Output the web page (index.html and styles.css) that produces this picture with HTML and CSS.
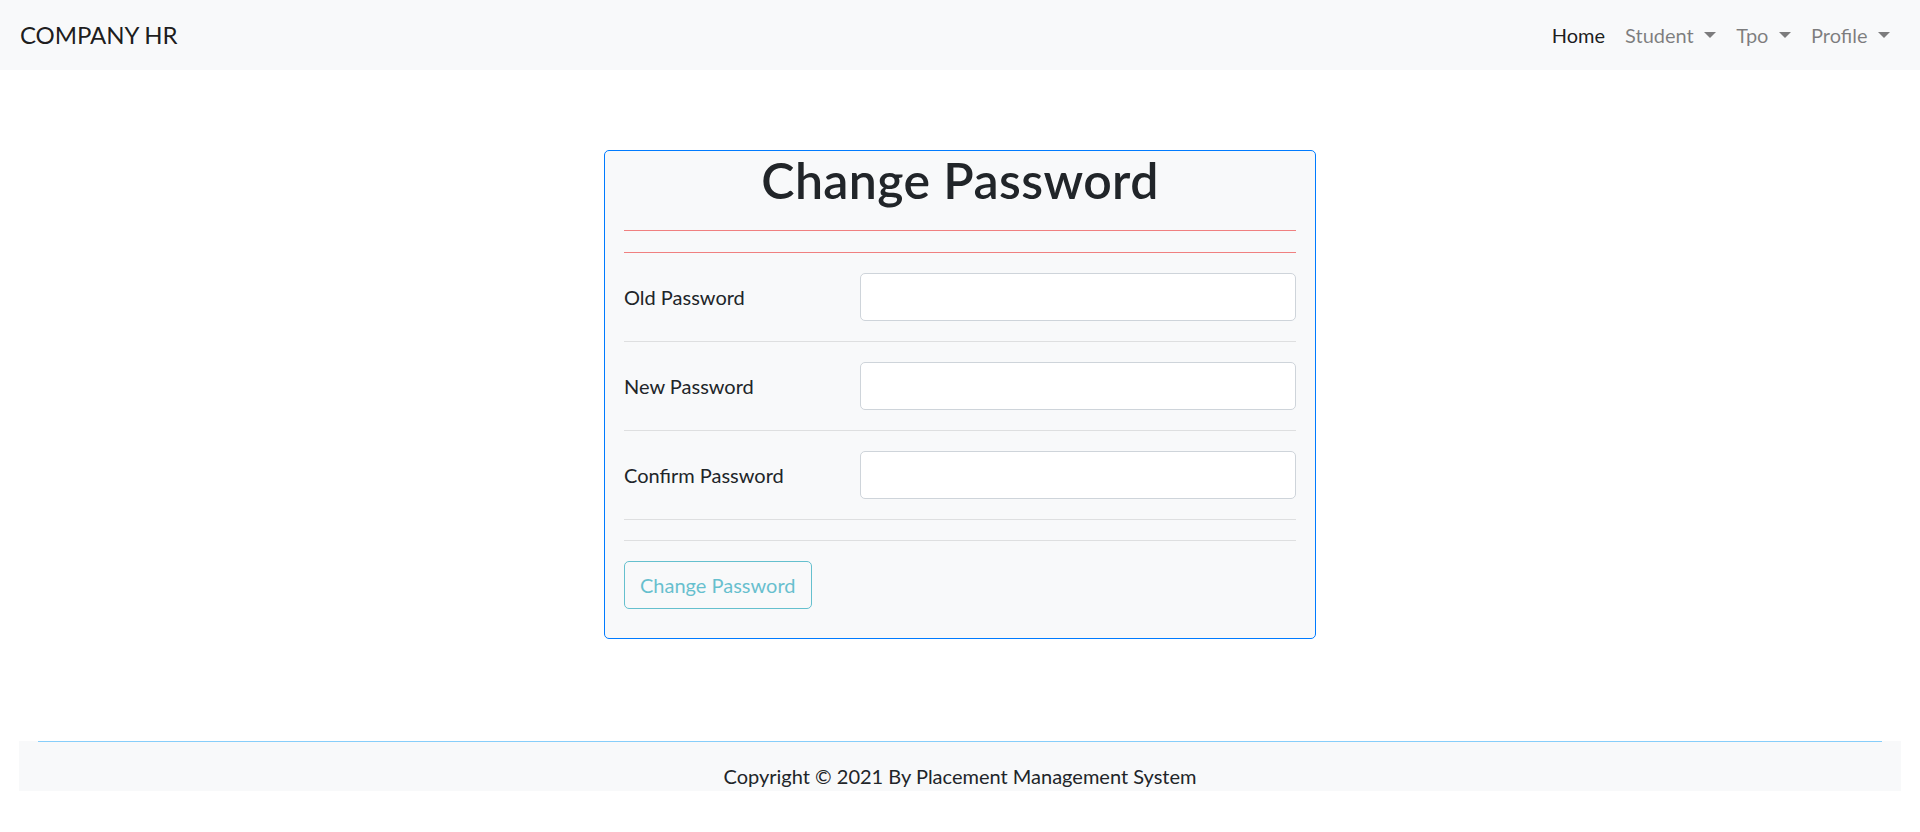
FILE: index.html
```html
<!DOCTYPE html>
<html lang="en">
<head>
<meta charset="utf-8">
<title>Change Password</title>
<link rel="stylesheet" href="styles.css">
</head>
<body>
<nav class="navbar">
  <a class="brand" href="#">COMPANY HR</a>
  <ul class="nav">
    <li><a class="nav-link active" href="#">Home</a></li>
    <li><a class="nav-link toggle" href="#">Student</a></li>
    <li><a class="nav-link toggle" href="#">Tpo</a></li>
    <li><a class="nav-link toggle" href="#">Profile</a></li>
  </ul>
</nav>

<main class="main">
  <form class="card">
    <h1 class="title">Change Password</h1>
    <div class="rule rule-red"></div>
    <div class="rule rule-red rule-second"></div>
    <div class="field">
      <label class="label" for="old">Old Password</label>
      <input class="input" id="old" type="password">
    </div>
    <div class="rule"></div>
    <div class="field">
      <label class="label" for="new">New Password</label>
      <input class="input" id="new" type="password">
    </div>
    <div class="rule"></div>
    <div class="field">
      <label class="label" for="confirm">Confirm Password</label>
      <input class="input" id="confirm" type="password">
    </div>
    <div class="rule"></div>
    <div class="rule"></div>
    <div class="actions">
      <button class="btn" type="submit" disabled>Change Password</button>
    </div>
  </form>
</main>

<footer class="footer">
  <div class="footer-line"></div>
  <p class="footer-text">Copyright © 2021 By Placement Management System</p>
</footer>
</body>
</html>
```

FILE: styles.css
```css
* {
  box-sizing: border-box;
}

html, body {
  margin: 0;
  padding: 0;
  background: #fff;
}

body {
  font-family: Lato, "Open Sans", "Liberation Sans", sans-serif;
  font-size: 20px;
  line-height: 30px;
  color: #212529;
}

a {
  text-decoration: none;
}

/* Navbar */
.navbar {
  height: 70px;
  padding: 10px 20px;
  background: #f8f9fa;
  display: flex;
  align-items: center;
  justify-content: space-between;
}

.brand {
  font-size: 24px;
  letter-spacing: -0.1px;
  line-height: 37.5px;
  padding: 6.25px 0;
  color: rgba(0, 0, 0, 0.9);
}

.nav {
  list-style: none;
  margin: 0;
  padding: 0;
  display: flex;
}

.nav-link {
  display: block;
  padding: 10px;
  color: rgba(0, 0, 0, 0.5);
}

.nav-link.active {
  color: rgba(0, 0, 0, 0.9);
}

.toggle::after {
  content: "";
  display: inline-block;
  margin-left: 10.5px;
  vertical-align: 0.255em;
  border-top: 0.3em solid;
  border-right: 0.3em solid transparent;
  border-left: 0.3em solid transparent;
  border-bottom: 0;
}

/* Card */
.main {
  padding-top: 80px;
}

.card {
  width: 712px;
  margin: 0 auto;
  background: #f8f9fa;
  border: 1px solid #007bff;
  border-radius: 5px;
  padding: 0 19px 29px;
  display: flex;
  flex-direction: column;
  gap: 20px;
}

.title {
  margin: 0;
  font-size: 50px;
  line-height: 59px;
  font-weight: 600;
  letter-spacing: 0.4px;
  text-align: center;
  color: #212529;
}

.rule {
  height: 1px;
  background: rgba(0, 0, 0, 0.1);
}

.rule-red {
  background: #f08080;
}

.rule-second {
  margin-top: 1px;
}

.field {
  display: grid;
  grid-template-columns: 236px 1fr;
  align-items: center;
}

.label {
  color: #212529;
}

.input {
  display: block;
  width: 100%;
  height: 48px;
  background: #fff;
  border: 1px solid #ced4da;
  border-radius: 5px;
  padding: 7px 15px;
  font: inherit;
}

.actions {
  display: flex;
}

.btn {
  font: inherit;
  line-height: 30px;
  height: 48px;
  padding: 8px 15px;
  color: #17a2b8;
  background: transparent;
  border: 1px solid #17a2b8;
  border-radius: 5px;
  opacity: 0.65;
}

/* Footer */
.footer {
  margin: 102px 19px 0;
  background: #f8f9fa;
}

.footer-line {
  margin: 0 19px;
  border-top: 1px solid #87cefa;
}

.footer-text {
  margin: 19px 0 0;
  text-align: center;
}
```
